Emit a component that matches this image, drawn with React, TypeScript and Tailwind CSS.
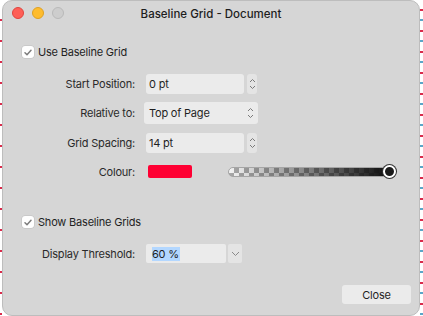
import React from 'react';

const Stepper: React.FC = () => (
  <div className="flex h-[20px] w-[10px] flex-col items-center justify-center rounded-[3px] bg-[#e4e4e4] text-[#7a7a7a]">
    <svg width="7" height="5" viewBox="0 0 7 5" fill="none" stroke="currentColor" strokeWidth="1">
      <path d="M1 4 L3.5 1.5 L6 4" />
    </svg>
    <svg width="7" height="5" viewBox="0 0 7 5" fill="none" stroke="currentColor" strokeWidth="1" className="mt-[2px]">
      <path d="M1 1 L3.5 3.5 L6 1" />
    </svg>
  </div>
);

const Check: React.FC<{ label: string }> = ({ label }) => (
  <label className="flex h-[14px] items-center gap-[4px]">
    <span className="flex h-[12px] w-[12px] items-center justify-center rounded-[3px] bg-white shadow-[0_0_0_0.5px_#bdbdbd]">
      <svg width="8" height="7" viewBox="0 0 8 7" fill="none" stroke="#7d7d7d" strokeWidth="1.5" strokeLinecap="round" strokeLinejoin="round">
        <path d="M1 3.8 L3 5.7 L7 1.2" />
      </svg>
    </span>
    <span>{label}</span>
  </label>
);

const Label: React.FC<{ children: React.ReactNode }> = ({ children }) => (
  <div className="w-[132px] text-right text-[#2a2a2a]">{children}</div>
);

const App: React.FC = () => {
  return (
    <div className="flex h-[316px] w-[423px] bg-white font-['Inter','Liberation_Sans',sans-serif] text-[11px] leading-[14px] tracking-[-0.2px] text-[#1f1f1f]">
      {/* page behind the dialog */}
      <div className="h-full w-[2px] bg-[repeating-linear-gradient(to_bottom,#fff_0px,#fff_19px,#d92b4b_19px,#d92b4b_21px)]" />

      <div className="flex h-full w-[418px] flex-col rounded-[10px] border border-[#bdbdbd] bg-[#d6d6d6]">
        {/* title bar */}
        <div className="relative flex h-[25px] items-center justify-center">
          <div className="absolute left-[9px] top-[6px] flex gap-[8px]">
            <span className="h-[12px] w-[12px] rounded-full border border-[#e0443e] bg-[#fe5f57]" />
            <span className="h-[12px] w-[12px] rounded-full border border-[#dea123] bg-[#febc2e]" />
            <span className="h-[12px] w-[12px] rounded-full border border-[#b9b9b9] bg-[#cdcdcd]" />
          </div>
          <div className="text-[11.5px] font-medium tracking-[0px] text-[#1d1d1d]">Baseline Grid - Document</div>
        </div>

        <div className="mt-[19px] pl-[19px]">
          <Check label="Use Baseline Grid" />
        </div>

        <div className="mt-[15px] flex h-[20px] items-center gap-[11px]">
          <Label>Start Position:</Label>
          <div className="flex items-center gap-[3px]">
            <div className="flex h-[20px] w-[98px] items-center rounded-[3px] bg-[#ebebeb] pl-[3px]">0 pt</div>
            <Stepper />
          </div>
        </div>

        <div className="mt-[8px] flex h-[22px] items-center gap-[9px]">
          <Label>Relative to:</Label>
          <div className="flex h-[22px] w-[114px] items-center justify-between rounded-[3px] bg-[#ebebeb] pl-[5px] pr-[4px]">
            <span>Top of Page</span>
            <span className="flex flex-col items-center text-[#7a7a7a]">
              <svg width="7" height="5" viewBox="0 0 7 5" fill="none" stroke="currentColor" strokeWidth="1">
                <path d="M1 4 L3.5 1.5 L6 4" />
              </svg>
              <svg width="7" height="5" viewBox="0 0 7 5" fill="none" stroke="currentColor" strokeWidth="1" className="mt-[2px]">
                <path d="M1 1 L3.5 3.5 L6 1" />
              </svg>
            </span>
          </div>
        </div>

        <div className="mt-[9px] flex h-[20px] items-center gap-[11px]">
          <Label>Grid Spacing:</Label>
          <div className="flex items-center gap-[3px]">
            <div className="flex h-[20px] w-[98px] items-center rounded-[3px] bg-[#ebebeb] pl-[3px]">14 pt</div>
            <Stepper />
          </div>
        </div>

        <div className="mt-[12px] flex h-[13px] items-center gap-[13px]">
          <Label>Colour:</Label>
          <div className="h-[13px] w-[44px] rounded-[2px] bg-[#ff0033]" />
          <div className="relative ml-[23px] h-[10px] w-[160px]">
            <div className="h-full w-full overflow-hidden rounded-full border border-[#a5a5a5] bg-[repeating-conic-gradient(#a8a8a8_0%_25%,#f4f4f4_0%_50%)] bg-[length:10px_10px]">
              <div className="h-full w-full bg-gradient-to-r from-[#ffffff00] to-[#111111]" />
            </div>
            <div className="absolute right-[-8px] top-[-2px] h-[13px] w-[13px] rounded-full border-[2px] border-white bg-[#1a1a1a] shadow-[0_0_0_1px_#333]" />
          </div>
        </div>

        <div className="mt-[37px] pl-[19px]">
          <Check label="Show Baseline Grids" />
        </div>

        <div className="mt-[15px] flex h-[19px] items-center gap-[11px]">
          <Label>Display Threshold:</Label>
          <div className="flex items-center gap-[2px]">
            <div className="flex h-[19px] w-[80px] items-center rounded-[2px] bg-[#ebebeb] pl-[6px]">
              <span className="bg-[#b3d7ff] pr-[1px]">60 %</span>
            </div>
            <div className="flex h-[19px] w-[14px] items-center justify-center rounded-[2px] bg-[#e4e4e4] text-[#8a8a8a]">
              <svg width="9" height="6" viewBox="0 0 9 6" fill="none" stroke="currentColor" strokeWidth="1">
                <path d="M1 1 L4.5 4.5 L8 1" />
              </svg>
            </div>
          </div>
        </div>

        <div className="mt-[22px] flex justify-end pr-[8px]">
          <button className="h-[19px] w-[69px] rounded-[3px] bg-[#ebebeb] text-[11px] text-[#1f1f1f]">Close</button>
        </div>
      </div>

      <div className="h-full w-[3px] bg-[repeating-linear-gradient(to_bottom,#fff_0px,#fff_9px,#d92b4b_9px,#d92b4b_11px,#fff_11px,#fff_19px,#5aa6c8_19px,#5aa6c8_21px)]" />
    </div>
  );
};

export default App;
